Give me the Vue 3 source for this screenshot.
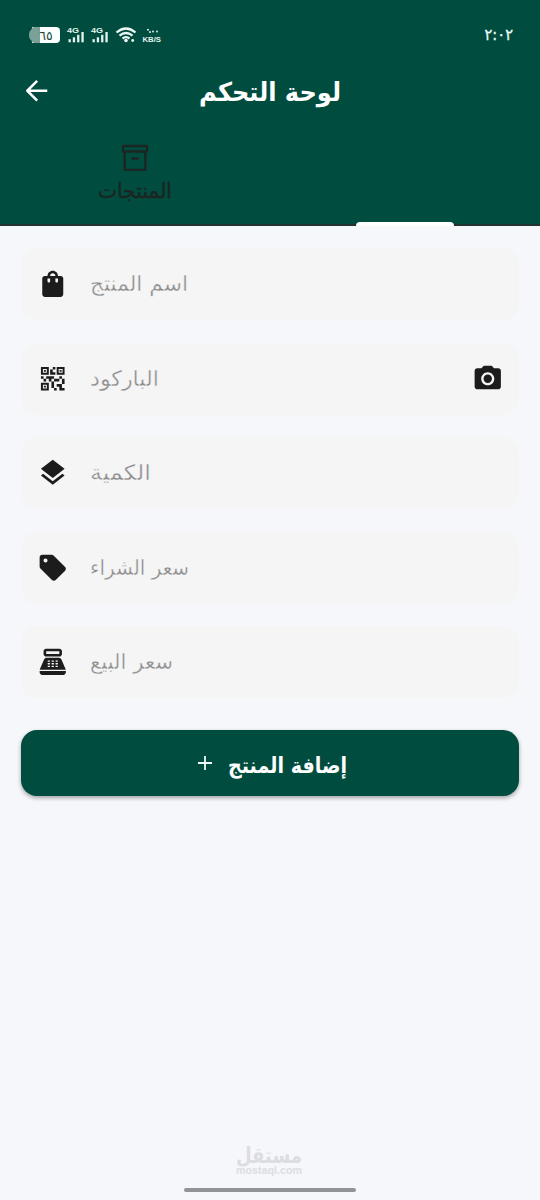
<script setup>
const fields = [
  { label: 'اسم المنتج', w: 98, icon: 'M18 6h-2c0-2.21-1.79-4-4-4S8 3.79 8 6H6c-1.1 0-2 .9-2 2v12c0 1.1.9 2 2 2h12c1.1 0 2-.9 2-2V8c0-1.1-.9-2-2-2zm-8 4c0 .55-.45 1-1 1s-1-.45-1-1V8h2v2zm2-6c1.1 0 2 .9 2 2h-4c0-1.1.9-2 2-2zm4 6c0 .55-.45 1-1 1s-1-.45-1-1V8h2v2z' },
  { label: 'الباركود', w: 69, camera: true, icon: 'M15 21h-2v-2h2v2zm-2-7h-2v5h2v-5zm8-2h-2v4h2v-4zm-2-2h-2v2h2v-2zM7 12H5v2h2v-2zm-2-2H3v2h2v-2zm7-5h2V3h-2v2zm-7.5-.5v3h3v-3h-3zM9 9H3V3h6v6zm-4.5 7.5v3h3v-3h-3zM9 21H3v-6h6v6zm7.5-16.5v3h3v-3h-3zM21 9h-6V3h6v6zm-2 10v-3h-4v2h2v3h4v-2h-2zm-2-7h-4v2h4v-2zm-4-2H7v2h2v2h2v-2h2v-2zm1-1V7h-2V5h-2v4h4zM6.75 5.25h-1.5v1.5h1.5v-1.5zm0 12h-1.5v1.5h1.5v-1.5zm12-12h-1.5v1.5h1.5v-1.5z' },
  { label: 'الكمية', w: 61, icon: 'M11.99 18.54l-7.37-5.73L3 14.07l9 7 9-7-1.63-1.27-7.38 5.74zM12 16l7.36-5.73L21 9l-9-7-9 7 1.63 1.27L12 16z' },
  { label: 'سعر الشراء', w: 99, icon: 'M21.41 11.41l-8.83-8.83C12.21 2.21 11.7 2 11.17 2H4c-1.1 0-2 .9-2 2v7.17c0 .53.21 1.04.59 1.41l8.83 8.83c.78.78 2.05.78 2.83 0l7.17-7.17c.78-.78.78-2.04-.01-2.83zM6.5 8C5.67 8 5 7.33 5 6.5S5.67 5 6.5 5 8 5.67 8 6.5 7.33 8 6.5 8z' },
  { label: 'سعر البيع', w: 83, register: true, icon: 'M17 2H7c-1.1 0-2 .9-2 2v2c0 1.1.9 2 2 2h10c1.1 0 2-.9 2-2V4c0-1.1-.9-2-2-2zm0 4H7V4h10v2zm3 16H4c-1.1 0-2-.9-2-2v-1h20v1c0 1.1-.9 2-2 2zm-1.47-11.81A2.008 2.008 0 0 0 16.7 9H7.3c-.79 0-1.51.47-1.83 1.19L2 18h20l-3.47-7.81z' },
]
const keyX = [8, 11, 14]
const keyY = [11, 13, 15]
</script>

<template>
  <div class="screen">
    <header class="top">
      <div class="status">
        <svg width="142" height="22" viewBox="0 0 142 22">
          <path d="M12 3h24a4 4 0 0 1 4 4v8a4 4 0 0 1-4 4H12z" fill="#fbfffd" />
          <path d="M20 3h-6q-2 0-3 3-2 1-2 5t2 5q1 3 3 3h6z" fill="#79a197" />
          <text x="26" y="15.5" font-size="12.5" fill="#24483e" class="digits" text-anchor="middle">٦٥</text>
          <g v-for="x in [47, 71]" :key="x" :transform="`translate(${x} 0)`" fill="#e4f5ef">
            <text x="0" y="9" font-size="8" class="latin" textLength="12" lengthAdjust="spacingAndGlyphs">4G</text>
            <rect x="1.5" y="15.2" width="2.3" height="3.1" />
            <rect x="5.8" y="13.3" width="2.3" height="5" />
            <rect x="10.1" y="10.8" width="2.3" height="7.5" />
            <rect x="14.4" y="8" width="2.3" height="10.3" />
          </g>
          <g fill="none" stroke="#eefaf6" stroke-width="2.2">
            <path d="M96.5 8.500q9.500-8 19 0" />
            <path d="M99.500 11.700q6.500-5.400 13 0" />
            <path d="M102.500 14.500q3.500-2.600 7 0" />
          </g>
          <circle cx="106" cy="16.500" r="1.800" fill="#eefaf6" />
          <circle cx="112.700" cy="16.500" r="1.400" fill="#eefaf6" />
          <g fill="#d3e9e2">
            <rect x="127" y="5" width="2" height="1.500" /><rect x="129" y="7.300" width="2" height="1.500" />
            <circle cx="133" cy="7.500" r="1" /><circle cx="137" cy="7.500" r="1" />
          </g>
          <text x="122.500" y="17.800" font-size="7.500" fill="#e4f5ef" class="latin" textLength="18.500" lengthAdjust="spacingAndGlyphs">KB/S</text>
        </svg>
        <svg width="29" height="22" viewBox="0 0 29 22">
          <text x="0.500" y="15.500" font-size="16" fill="#eefaf6" stroke="#eefaf6" stroke-width=".3" class="digits" textLength="28.500" lengthAdjust="spacingAndGlyphs">٢:٠٢</text>
        </svg>
      </div>
      <div class="bar">
        <svg class="back" width="31.500" height="31.500" viewBox="0 0 24 24" fill="none" stroke="#fff" stroke-width="1.900" stroke-linejoin="round">
          <path d="M20 12H5M12.300 4.500L4.800 12l7.500 7.500" />
        </svg>
        <svg width="142" height="44" viewBox="0 0 142 44">
          <text x="142" y="31.500" font-size="26" font-weight="700" fill="#fff" class="ar" textLength="142" lengthAdjust="spacingAndGlyphs">لوحة التحكم</text>
        </svg>
      </div>
      <nav class="tabs">
        <div class="tab">
          <svg width="28" height="28" viewBox="0 0 28 28" fill="none" stroke="#1b2522" stroke-width="2.300" stroke-linejoin="round">
            <path d="M2 2h24v5.500H2zM3.700 7.500v18.400h20.600V7.500M10.500 14.500h7" />
          </svg>
          <svg width="74" height="34" viewBox="0 0 74 34">
            <text x="74" y="26" font-size="21" fill="#1b2522" stroke="#1b2522" stroke-width=".4" class="ar" textLength="74" lengthAdjust="spacingAndGlyphs">المنتجات</text>
          </svg>
        </div>
        <div class="tab active"><span class="indicator"></span></div>
      </nav>
    </header>

    <main class="form">
      <div v-for="f in fields" :key="f.label" class="field">
        <svg class="icon" width="31.500" height="31.500" viewBox="0 0 24 24" fill="#1c1c1c">
          <path :d="f.icon" fill-rule="evenodd" />
          <g v-if="f.register" fill="#f5f5f5">
            <template v-for="y in keyY" :key="y">
              <rect v-for="x in keyX" :key="x" :x="x" :y="y" width="2" height="1" rx=".5" />
            </template>
          </g>
        </svg>
        <svg class="label" :width="f.w" height="40" :viewBox="`0 0 ${f.w} 40`">
          <text :x="f.w" y="27" font-size="21.500" fill="#8a8a8a" stroke="#f5f5f5" stroke-width=".4" class="ar" :textLength="f.w" lengthAdjust="spacingAndGlyphs">{{ f.label }}</text>
        </svg>
        <svg v-if="f.camera" class="camera" width="31.500" height="31.500" viewBox="0 0 24 24" fill="#1c1c1c">
          <circle cx="12" cy="12" r="3.200" />
          <path d="M9 2L7.170 4H4c-1.100 0-2 .9-2 2v12c0 1.100.9 2 2 2h16c1.100 0 2-.9 2-2V6c0-1.100-.9-2-2-2h-3.170L15 2H9zm3 15c-2.760 0-5-2.240-5-5s2.240-5 5-5 5 2.240 5 5-2.240 5-5 5z" />
        </svg>
      </div>
      <button class="submit">
        <svg width="14" height="14" viewBox="0 0 14 14" stroke="#eefaf6" stroke-width="1.800"><path d="M7 0v14M0 7h14" /></svg>
        <svg width="119" height="44" viewBox="0 0 119 44">
          <text x="119" y="32" font-size="22" font-weight="700" fill="#fff" class="ar" textLength="119" lengthAdjust="spacingAndGlyphs">إضافة المنتج</text>
        </svg>
      </button>
    </main>

    <footer class="foot">
      <svg width="68" height="36" viewBox="0 0 68 36" fill="#dcdde1">
        <text x="67" y="22" font-size="22" font-weight="700" class="ar" textLength="66" lengthAdjust="spacingAndGlyphs">مستقل</text>
        <text x="1" y="33" font-size="10.500" class="latin" textLength="66" lengthAdjust="spacingAndGlyphs">mostaql.com</text>
      </svg>
      <div class="home"></div>
    </footer>
  </div>
</template>

<style>
body { margin: 0; background: #f6f7fb; }
</style>

<style scoped>
.screen { width: 540px; height: 1200px; display: flex; flex-direction: column; background: #f6f7fb; overflow: hidden; font-family: "DejaVu Sans", sans-serif; }
svg { display: block; flex: none; overflow: visible; }
.ar { font-family: "DejaVu Sans", sans-serif; direction: rtl; }
.digits { font-family: "DejaVu Sans", sans-serif; }
.latin { font-family: "Liberation Sans", sans-serif; font-weight: 700; }
.top { box-sizing: border-box; height: 226px; background: #004d40; border-bottom: 2px solid #20332e; display: flex; flex-direction: column; }
.status { height: 46px; padding: 24px 27px 0 20px; display: flex; justify-content: space-between; box-sizing: border-box; }
.bar { height: 92px; display: grid; grid-template-columns: 52px 1fr 52px; align-items: center; justify-items: center; padding-bottom: 2px; box-sizing: border-box; }
.back { justify-self: end; }
.tabs { flex: 1; display: grid; grid-template-columns: 1fr 1fr; }
.tab { display: flex; flex-direction: column; align-items: center; padding-top: 6px; }
.active { justify-content: flex-end; padding: 0; }
.indicator { width: 98px; height: 4px; margin-bottom: -2px; background: #fff; border-radius: 4px 4px 0 0; }
.form { flex: 1; padding: 22px 21px 0; display: flex; flex-direction: column; gap: 22.5px; }
.field { height: 72px; flex: none; display: flex; align-items: center; background: #f5f5f5; border-radius: 16px; }
.icon { margin-left: 15.5px; }
.label { margin-left: 21.5px; }
.camera { margin-left: auto; margin-right: 16px; }
.submit { height: 66px; flex: none; margin-top: 9.5px; padding: 0 0 0 4px; border: 0; border-radius: 16px; background: #004d40; box-shadow: 0 2px 4px rgba(0, 0, 0, .35); display: flex; align-items: center; justify-content: center; gap: 16px; }
.foot { height: 60px; display: flex; flex-direction: column; align-items: center; }
.foot svg { margin-top: 1px; margin-right: 2px; }
.home { width: 172px; height: 4px; margin-top: 11px; background: #929399; border-radius: 2px; }
</style>
